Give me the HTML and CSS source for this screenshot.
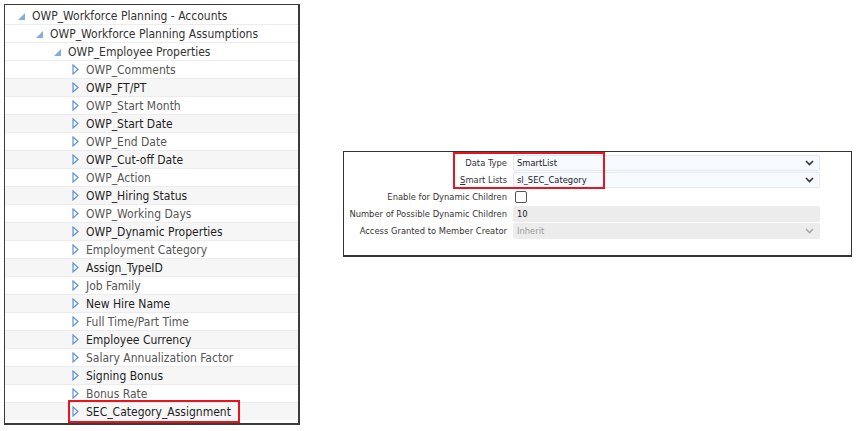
FILE: index.html
```html
<!DOCTYPE html>
<html lang="en">
<head>
  <meta charset="UTF-8" />
  <title>Member Properties</title>
  <link rel="stylesheet" href="styles.css">
</head>
<body>
  <div class="page">
    <div class="tree">
      <div class="row lvl1"><svg class="tw" width="7" height="7" viewBox="0 0 7 7"><polygon points="7,0 7,7 0,7"/></svg><span>OWP_Workforce Planning - Accounts</span></div>
      <div class="row lvl2"><svg class="tw" width="7" height="7" viewBox="0 0 7 7"><polygon points="7,0 7,7 0,7"/></svg><span>OWP_Workforce Planning Assumptions</span></div>
      <div class="row lvl3"><svg class="tw" width="7" height="7" viewBox="0 0 7 7"><polygon points="7,0 7,7 0,7"/></svg><span>OWP_Employee Properties</span></div>
      <div class="row lvl4"><svg class="tc" width="7" height="11" viewBox="0 0 7 11"><polygon points="1,1 6,5.5 1,10"/></svg><span>OWP_Comments</span></div>
      <div class="row lvl4 alt"><svg class="tc" width="7" height="11" viewBox="0 0 7 11"><polygon points="1,1 6,5.5 1,10"/></svg><span>OWP_FT/PT</span></div>
      <div class="row lvl4"><svg class="tc" width="7" height="11" viewBox="0 0 7 11"><polygon points="1,1 6,5.5 1,10"/></svg><span>OWP_Start Month</span></div>
      <div class="row lvl4 alt"><svg class="tc" width="7" height="11" viewBox="0 0 7 11"><polygon points="1,1 6,5.5 1,10"/></svg><span>OWP_Start Date</span></div>
      <div class="row lvl4"><svg class="tc" width="7" height="11" viewBox="0 0 7 11"><polygon points="1,1 6,5.5 1,10"/></svg><span>OWP_End Date</span></div>
      <div class="row lvl4 alt"><svg class="tc" width="7" height="11" viewBox="0 0 7 11"><polygon points="1,1 6,5.5 1,10"/></svg><span>OWP_Cut-off Date</span></div>
      <div class="row lvl4"><svg class="tc" width="7" height="11" viewBox="0 0 7 11"><polygon points="1,1 6,5.5 1,10"/></svg><span>OWP_Action</span></div>
      <div class="row lvl4 alt"><svg class="tc" width="7" height="11" viewBox="0 0 7 11"><polygon points="1,1 6,5.5 1,10"/></svg><span>OWP_Hiring Status</span></div>
      <div class="row lvl4"><svg class="tc" width="7" height="11" viewBox="0 0 7 11"><polygon points="1,1 6,5.5 1,10"/></svg><span>OWP_Working Days</span></div>
      <div class="row lvl4 alt"><svg class="tc" width="7" height="11" viewBox="0 0 7 11"><polygon points="1,1 6,5.5 1,10"/></svg><span>OWP_Dynamic Properties</span></div>
      <div class="row lvl4"><svg class="tc" width="7" height="11" viewBox="0 0 7 11"><polygon points="1,1 6,5.5 1,10"/></svg><span>Employment Category</span></div>
      <div class="row lvl4 alt"><svg class="tc" width="7" height="11" viewBox="0 0 7 11"><polygon points="1,1 6,5.5 1,10"/></svg><span>Assign_TypeID</span></div>
      <div class="row lvl4"><svg class="tc" width="7" height="11" viewBox="0 0 7 11"><polygon points="1,1 6,5.5 1,10"/></svg><span>Job Family</span></div>
      <div class="row lvl4 alt"><svg class="tc" width="7" height="11" viewBox="0 0 7 11"><polygon points="1,1 6,5.5 1,10"/></svg><span>New Hire Name</span></div>
      <div class="row lvl4"><svg class="tc" width="7" height="11" viewBox="0 0 7 11"><polygon points="1,1 6,5.5 1,10"/></svg><span>Full Time/Part Time</span></div>
      <div class="row lvl4 alt"><svg class="tc" width="7" height="11" viewBox="0 0 7 11"><polygon points="1,1 6,5.5 1,10"/></svg><span>Employee Currency</span></div>
      <div class="row lvl4"><svg class="tc" width="7" height="11" viewBox="0 0 7 11"><polygon points="1,1 6,5.5 1,10"/></svg><span>Salary Annualization Factor</span></div>
      <div class="row lvl4 alt"><svg class="tc" width="7" height="11" viewBox="0 0 7 11"><polygon points="1,1 6,5.5 1,10"/></svg><span>Signing Bonus</span></div>
      <div class="row lvl4"><svg class="tc" width="7" height="11" viewBox="0 0 7 11"><polygon points="1,1 6,5.5 1,10"/></svg><span>Bonus Rate</span></div>
      <div class="row lvl4 alt last"><svg class="tc" width="7" height="11" viewBox="0 0 7 11"><polygon points="1,1 6,5.5 1,10"/></svg><span>SEC_Category_Assignment</span><div class="mark-row"></div></div>
    </div>

    <div class="props">
      <div class="mark-props"></div>
      <div class="prop">
        <label>Data Type</label>
        <div class="field select"><span>SmartList</span><svg class="chev" width="9" height="6" viewBox="0 0 9 6"><polyline points="1,1 4.5,4.5 8,1"/></svg></div>
      </div>
      <div class="prop">
        <label><u>S</u>mart Lists</label>
        <div class="field select"><span>sl_SEC_Category</span><svg class="chev" width="9" height="6" viewBox="0 0 9 6"><polyline points="1,1 4.5,4.5 8,1"/></svg></div>
      </div>
      <div class="prop">
        <label>Enable for Dynamic Children</label>
        <div class="check"></div>
      </div>
      <div class="prop">
        <label>Number of Possible Dynamic Children</label>
        <div class="field disabled"><span class="val">10</span></div>
      </div>
      <div class="prop">
        <label>Access Granted to Member Creator</label>
        <div class="field disabled select"><span class="muted">Inherit</span><svg class="chev light" width="9" height="6" viewBox="0 0 9 6"><polyline points="1,1 4.5,4.5 8,1"/></svg></div>
      </div>
    </div>
  </div>
</body>
</html>
```

FILE: styles.css
```css
body {
  margin: 0;
  background: #fff;
  font-family: "DejaVu Sans Condensed", "DejaVu Sans", sans-serif;
  color: #333;
}

.page {
  display: flex;
  align-items: flex-start;
  padding: 4px;
}

/* left tree */
.tree {
  width: 293px;
  height: 416px;
  border: 1px solid #3a3a3a;
  border-right-width: 2px;
  border-bottom-width: 2px;
  padding-top: 2px;
  overflow: hidden;
}

.row {
  position: relative;
  display: flex;
  align-items: center;
  height: 17px;
  border-bottom: 1px solid #ececec;
  font-size: 12px;
  color: #555;
  white-space: nowrap;
}

.row.alt {
  background: #f6f6f6;
  color: #1e1e1e;
}

.row.lvl1 { padding-left: 13px; color: #333; }
.row.lvl2 { padding-left: 31px; color: #333; }
.row.lvl3 { padding-left: 49px; color: #333; }
.row.lvl4 { padding-left: 67px; }

.tw {
  fill: #86aedb;
  margin-right: 7px;
  margin-top: 2px;
}

.tc {
  fill: none;
  stroke: #5d95d6;
  stroke-width: 1.2;
  margin-right: 7px;
}

.row.last {
  border-bottom: none;
}

.mark-row {
  position: absolute;
  left: 63px;
  top: -3px;
  width: 168px;
  height: 19px;
  border: 2px solid #e8141e;
}

/* right properties panel */
.props {
  position: relative;
  width: 509px;
  height: 106px;
  margin-left: 43px;
  margin-top: 147px;
  border: 1px solid #333;
  border-bottom-width: 2px;
  padding-top: 2px;
  box-sizing: border-box;
  font-size: 9.3px;
}

.prop {
  display: grid;
  grid-template-columns: 163px 307px;
  column-gap: 6px;
  align-items: center;
  height: 17px;
}

.prop label {
  text-align: right;
  color: #333;
  white-space: nowrap;
}

.field {
  display: flex;
  align-items: center;
  justify-content: space-between;
  height: 14px;
  padding: 0 5px 0 3px;
  border: 1px solid #e3e7ee;
  border-radius: 2px;
  background: #f6f9fd;
  color: #222;
}

.field.disabled {
  background: #ececec;
  border-color: #ececec;
}

.field .muted {
  color: #9a9a9a;
}

.chev {
  fill: none;
  stroke: #333;
  stroke-width: 1.6;
}

.chev.light {
  stroke: #a8a8a8;
}

.check {
  width: 10px;
  height: 10px;
  margin-left: 2px;
  border: 1px solid #555;
  border-radius: 2px;
  background: #fff;
}

.mark-props {
  position: absolute;
  left: 109px;
  top: 0;
  width: 148px;
  height: 33px;
  border: 2px solid #e8141e;
}
```
